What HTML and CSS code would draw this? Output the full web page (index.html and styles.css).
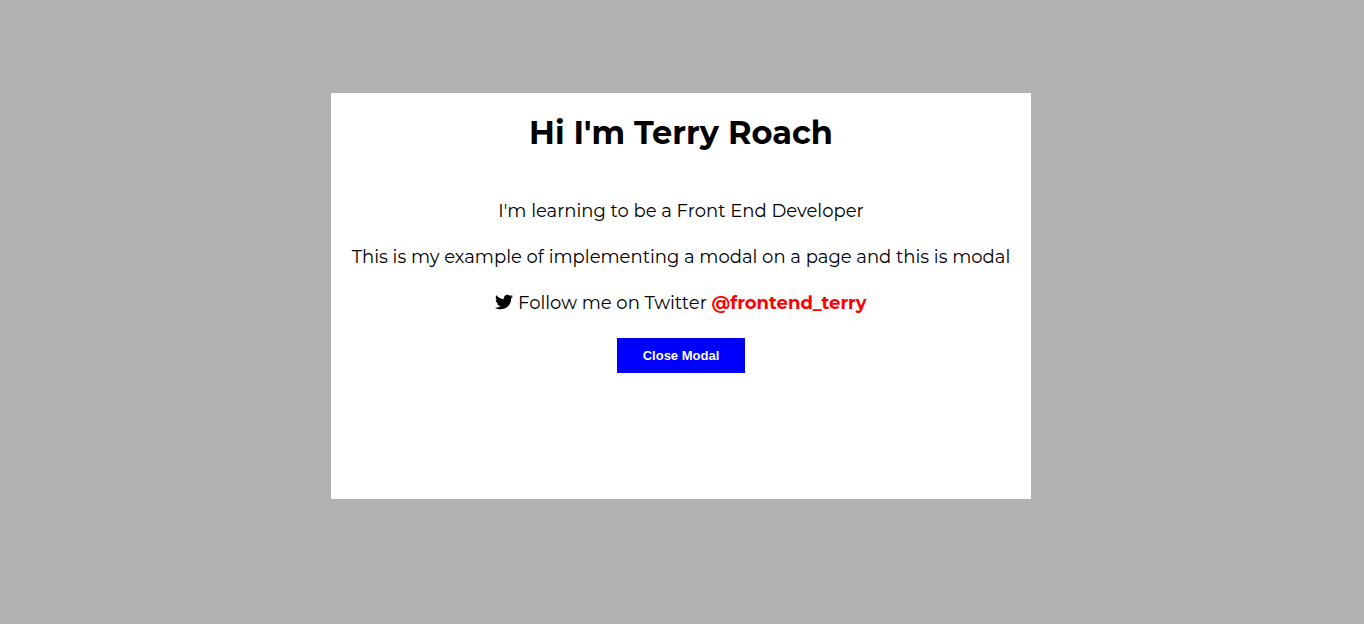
FILE: index.html
```html
<!DOCTYPE html>
<html lang="en">
<head>
<meta charset="utf-8">
<title>Modal</title>
<link rel="stylesheet" href="styles.css">
</head>
<body>
<div class="overlay">
  <main class="modal" role="dialog" aria-labelledby="title">
    <h1 class="title" id="title">Hi I'm Terry Roach</h1>
    <p class="text">I'm learning to be a Front End Developer</p>
    <p class="text">This is my example of implementing a modal on a page and this is modal</p>
    <p class="text"><svg class="bird" viewBox="0 0 512 512" aria-hidden="true"><path d="M459.37 151.716c.325 4.548.325 9.097.325 13.645 0 138.72-105.583 298.558-298.558 298.558-59.452 0-114.68-17.219-161.137-47.106 8.447.974 16.568 1.299 25.34 1.299 49.055 0 94.213-16.568 130.274-44.832-46.132-.975-84.792-31.188-98.112-72.772 6.498.974 12.995 1.624 19.818 1.624 9.421 0 18.843-1.3 27.614-3.573-48.081-9.747-84.143-51.98-84.143-102.985v-1.299c13.969 7.797 30.214 12.67 47.431 13.319-28.264-18.843-46.781-51.005-46.781-87.391 0-19.492 5.197-37.36 14.294-52.954 51.655 63.675 129.3 105.258 216.365 109.807-1.624-7.797-2.599-15.918-2.599-24.04 0-57.828 46.782-104.934 104.934-104.934 30.213 0 57.502 12.67 76.67 33.137 23.715-4.548 46.456-13.32 66.599-25.34-7.798 24.366-24.366 44.833-46.132 57.827 21.117-2.273 41.584-8.122 60.426-16.243-14.292 20.791-32.161 39.308-52.628 54.253z"/></svg> Follow me on Twitter <a class="link" href="#">@frontend_terry</a></p>
    <button class="close" type="button">Close Modal</button>
  </main>
</div>
</body>
</html>
```
FILE: styles.css
```css
* {
  box-sizing: border-box;
}

body {
  margin: 0;
  font-family: Montserrat, "Open Sans", sans-serif;
  color: #000;
}

.overlay {
  min-height: 100vh;
  padding: 93px 22px 93px 20px;
  background: #b2b2b2;
}

.modal {
  display: flex;
  flex-direction: column;
  align-items: center;
  width: 100%;
  max-width: 700px;
  min-height: 65vh;
  margin: 0 auto;
  padding: 20px 16px;
  background: #fff;
  text-align: center;
}

.title {
  margin: 0 0 44px;
  font-size: 32px;
  line-height: 40px;
  font-weight: 700;
}

.text {
  margin: 0 0 18px;
  font-size: 18px;
  line-height: 28px;
  font-weight: 400;
}

.bird {
  width: 18px;
  height: 18px;
  vertical-align: -2px;
  fill: #000;
}

.link {
  color: #f00;
  font-weight: 700;
  text-decoration: none;
}

.close {
  margin-top: 3px;
  padding: 10px 26px;
  border: 0;
  background: #00f;
  color: #fff;
  font: 700 13px/15px "Liberation Sans", Arial, sans-serif;
  cursor: pointer;
}
```
